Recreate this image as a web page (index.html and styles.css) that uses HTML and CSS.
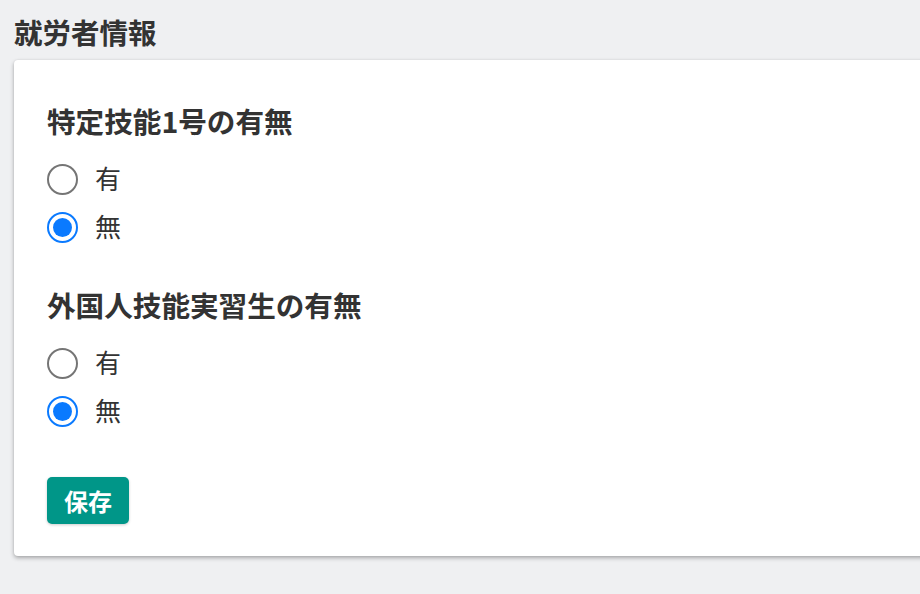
FILE: index.html
```html
<html>
    <head>
        <title>就労者情報</title>
        <meta charset="utf-8">
        <link rel="stylesheet" href="styles.css">
    </head>
    <body>
        <div id="page">
            <h1 class="pageTitle">就労者情報</h1>

            <div class="card">
                <div class="field">
                    <h2 class="fieldTitle">特定技能1号の有無</h2>
                    <label class="radioRow">
                        <input type="radio" name="specifiedSkill" value="yes">
                        <span>有</span>
                    </label>
                    <label class="radioRow">
                        <input type="radio" name="specifiedSkill" value="no" checked>
                        <span>無</span>
                    </label>
                </div>

                <div class="field">
                    <h2 class="fieldTitle">外国人技能実習生の有無</h2>
                    <label class="radioRow">
                        <input type="radio" name="trainee" value="yes">
                        <span>有</span>
                    </label>
                    <label class="radioRow">
                        <input type="radio" name="trainee" value="no" checked>
                        <span>無</span>
                    </label>
                </div>

                <div class="actions">
                    <button class="saveButton">保存</button>
                </div>
            </div>
        </div>
    </body>
</html>
```

FILE: styles.css
```css
*{
    box-sizing: border-box;
}

body{
    margin: 0;
    background-color: #eff0f2;
    font-family: "Noto Sans CJK JP", "Noto Sans", sans-serif;
    color: #333;
    overflow: hidden;
}

#page{
    padding: 14px 0 0 14px;
    height: 594px;
}

.pageTitle{
    margin: 0;
    font-size: 28.5px;
    line-height: 36px;
    font-weight: bold;
    color: #333;
}

.card{
    margin-top: 10px;
    margin-right: -20px;
    background-color: #fff;
    border-radius: 4px;
    box-shadow: 0 2px 4px rgba(0, 0, 0, 0.3), 0 0 2px rgba(0, 0, 0, 0.08);
    padding: 40px 33px 32px;
}

.field + .field{
    margin-top: 32px;
}

.fieldTitle{
    margin: 0 0 14px;
    font-size: 28.6px;
    line-height: 42px;
    font-weight: bold;
    color: #333;
}

.radioRow{
    display: flex;
    align-items: center;
    gap: 17px;
    height: 48px;
    font-size: 26px;
    color: #333;
}

.radioRow span{
    line-height: 1;
    padding-bottom: 5px;
}

.radioRow input{
    appearance: none;
    -webkit-appearance: none;
    margin: 0 0 2px;
    width: 31px;
    height: 31px;
    border: 2px solid #757575;
    border-radius: 50%;
    background-color: #fff;
    display: grid;
    place-items: center;
}

.radioRow input:checked{
    border-color: #0a7aff;
}

.radioRow input:checked::after{
    content: "";
    width: 19px;
    height: 19px;
    border-radius: 50%;
    background-color: #0a7aff;
}

.actions{
    margin-top: 41px;
}

.saveButton{
    font-family: "Noto Sans CJK JP", "Noto Sans", sans-serif;
    font-size: 24px;
    font-weight: bold;
    color: #fff;
    background-color: #009688;
    border: none;
    border-radius: 5px;
    height: 47px;
    padding: 0 17px;
    box-shadow: 0 1px 3px rgba(0, 0, 0, 0.2);
}
```
